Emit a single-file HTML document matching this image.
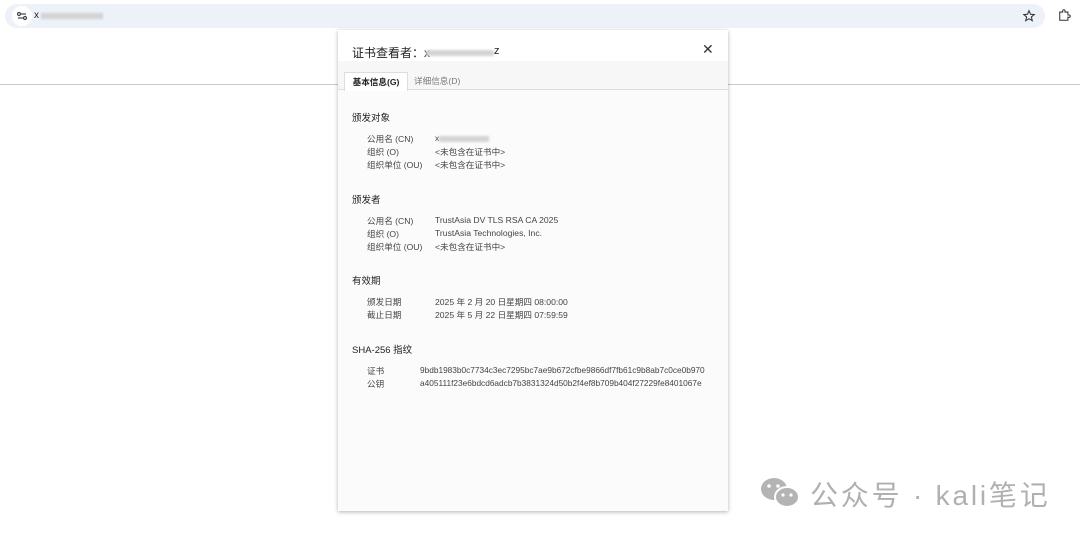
<!DOCTYPE html>
<html><head><meta charset="utf-8"><style>
body{margin:0;width:1080px;height:538px;background:#fff;position:relative;overflow:hidden;font-family:"Liberation Sans","Noto Sans CJK SC",sans-serif;}
.bar{position:absolute;left:5px;top:4px;width:1040px;height:24px;background:#edf1f8;border-radius:12px;}
.ic{position:absolute;left:7px;top:2px;width:20px;height:20px;border-radius:10px;background:#fff;}
.hr{position:absolute;left:0;top:84px;width:1080px;height:1px;background:#c8c8c8;}
.dlg{position:absolute;left:338px;top:30px;width:390px;height:481px;background:#fbfbfb;box-shadow:0 1px 4px rgba(0,0,0,.3);font-size:8.6px;color:#444;}
.hd{height:31px;background:#fff;position:relative;}
.tabs{height:28px;background:#f7f7f7;border-bottom:1px solid #ddd;position:relative;}
.t1{position:absolute;left:6px;top:11px;height:18px;width:62px;background:#fff;border:1px solid #ddd;border-bottom:none;font-weight:bold;color:#222;text-align:center;line-height:18px;}
.t2{position:absolute;left:76px;top:11px;line-height:18px;color:#777;}
.s{position:absolute;left:14px;font-size:9.5px;color:#222;}
.r{position:absolute;left:29px;}
.v{position:absolute;left:97px;}
.w{position:absolute;left:82px;font-size:8.3px;}
.blur{display:inline-block;background:#d4d4d4;height:6px;vertical-align:middle;filter:blur(1px);}
</style></head><body>
<div class="bar"><div class="ic"><svg width="20" height="20"><g stroke="#444" stroke-width="1.2" fill="none"><circle cx="7" cy="8" r="1.5"/><line x1="9" y1="8" x2="14" y2="8"/><circle cx="13" cy="12" r="1.5"/><line x1="6" y1="12" x2="11" y2="12"/></g></svg></div>
<span style="position:absolute;left:29px;top:6px;font-size:10px;color:#222">x</span><span class="blur" style="position:absolute;left:36px;top:9px;width:62px"></span>
<svg style="position:absolute;left:1017px;top:5px" width="14" height="14" viewBox="0 0 24 24"><path d="M12 3l2.6 6 6.4.5-4.9 4.2 1.5 6.3L12 16.6 6.4 20l1.5-6.3L3 9.5 9.4 9z" fill="none" stroke="#333" stroke-width="1.8"/></svg>
</div>
<svg style="position:absolute;left:1058px;top:8px" width="14" height="14" viewBox="0 0 24 24"><path d="M3 7h5V5a2 2 0 014 0v2h5v5h2a2 2 0 010 4h-2v5H3z" fill="none" stroke="#333" stroke-width="1.8"/></svg>
<div class="hr"></div>
<div class="dlg">
<div class="hd"><span style="position:absolute;left:14px;top:14px;font-size:12px;color:#222">证书查看者：x</span><span class="blur" style="position:absolute;left:88px;top:20px;width:68px"></span><span style="position:absolute;left:156px;top:15px;font-size:11px;color:#222">z</span>
<span style="position:absolute;left:364px;top:11px;font-size:14px;color:#333">✕</span></div>
<div class="tabs"><div class="t1">基本信息(G)</div><div class="t2">详细信息(D)</div></div>
<div class="s" style="top:80px">颁发对象</div>
<div class="r" style="top:103px">公用名 (CN)</div><div class="v" style="top:103px">x<span class="blur" style="width:50px"></span></div>
<div class="r" style="top:116px">组织 (O)</div><div class="v" style="top:116px">&lt;未包含在证书中&gt;</div>
<div class="r" style="top:129px">组织单位 (OU)</div><div class="v" style="top:129px">&lt;未包含在证书中&gt;</div>
<div class="s" style="top:162px">颁发者</div>
<div class="r" style="top:185px">公用名 (CN)</div><div class="v" style="top:185px">TrustAsia DV TLS RSA CA 2025</div>
<div class="r" style="top:198px">组织 (O)</div><div class="v" style="top:198px">TrustAsia Technologies, Inc.</div>
<div class="r" style="top:211px">组织单位 (OU)</div><div class="v" style="top:211px">&lt;未包含在证书中&gt;</div>
<div class="s" style="top:243px">有效期</div>
<div class="r" style="top:266px">颁发日期</div><div class="v" style="top:266px">2025 年 2 月 20 日星期四 08:00:00</div>
<div class="r" style="top:279px">截止日期</div><div class="v" style="top:279px">2025 年 5 月 22 日星期四 07:59:59</div>
<div class="s" style="top:312px">SHA-256 指纹</div>
<div class="r" style="top:335px">证书</div><div class="w" style="top:335px">9bdb1983b0c7734c3ec7295bc7ae9b672cfbe9866df7fb61c9b8ab7c0ce0b970</div>
<div class="r" style="top:348px">公钥</div><div class="w" style="top:348px">a405111f23e6bdcd6adcb7b3831324d50b2f4ef8b709b404f27229fe8401067e</div>
</div>
<svg style="position:absolute;left:759px;top:476px" width="44" height="34" viewBox="0 0 44 34"><ellipse cx="15" cy="13" rx="13" ry="11" fill="#b4b4b4"/><ellipse cx="28" cy="21" rx="12" ry="10" fill="#b4b4b4" stroke="#fff" stroke-width="2"/><circle cx="10" cy="10" r="1.8" fill="#fff"/><circle cx="19" cy="10" r="1.8" fill="#fff"/><circle cx="24" cy="19" r="1.6" fill="#fff"/><circle cx="32" cy="19" r="1.6" fill="#fff"/></svg>
<div style="position:absolute;left:810px;top:474px;font-size:28px;color:#b0b0b0;letter-spacing:2.8px">公众号 · kali笔记</div>
</body></html>
